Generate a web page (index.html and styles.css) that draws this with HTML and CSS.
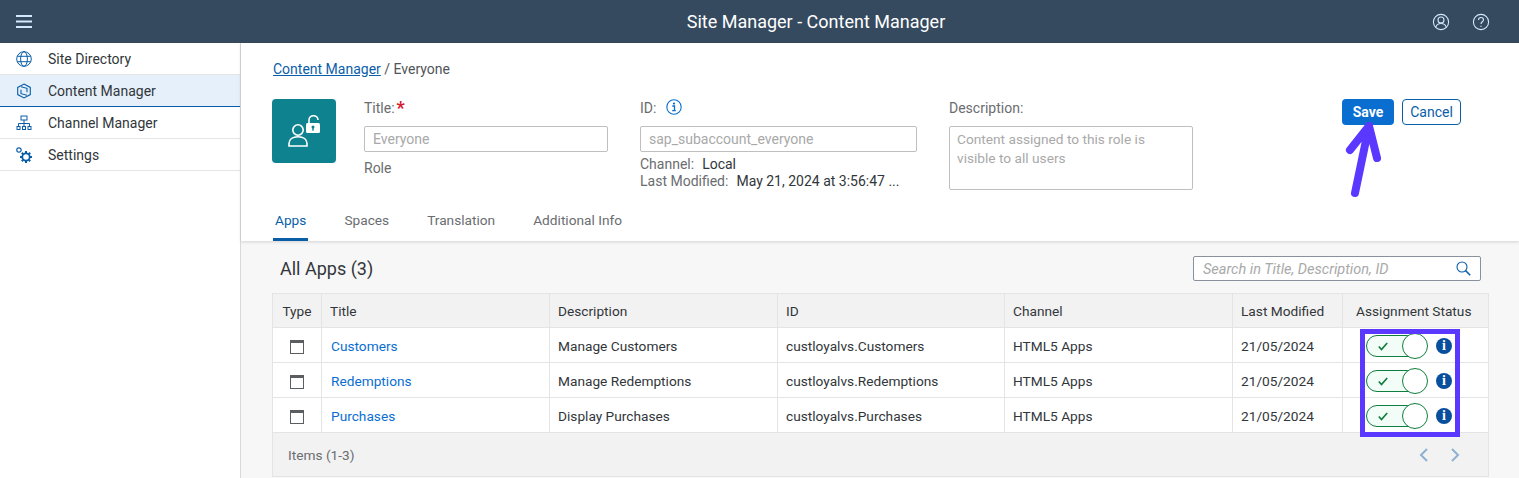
FILE: index.html
```html
<!DOCTYPE html>
<html lang="en">
<head>
    <meta charset="UTF-8">
    <title>Site Manager - Content Manager</title>
    <link rel="stylesheet" href="styles.css">
</head>
<body>
    <header class="shell">
        <svg class="shell-menu" width="16" height="13" viewBox="0 0 16 13"><path d="M0 1h16M0 6.500h16M0 12h16" stroke="#d1e8ff" stroke-width="1.800"/></svg>
        <div class="shell-title">Site Manager - Content Manager</div>
        <div class="shell-icons">
            <svg width="18" height="18" viewBox="0 0 18 18" fill="none" stroke="#d1e8ff" stroke-width="1.100"><circle cx="9" cy="9" r="7.600"/><circle cx="9" cy="7" r="3"/><path d="M3.800 14.200c.8-2.600 2.800-3.700 5.200-3.700s4.400 1.100 5.200 3.700"/></svg>
            <svg width="18" height="18" viewBox="0 0 18 18" fill="none" stroke="#d1e8ff" stroke-width="1.100"><circle cx="9" cy="9" r="7.600"/><path d="M6.500 7c0-1.500 1.100-2.500 2.500-2.500s2.500 1 2.500 2.300c0 2-2.500 2-2.500 4.200"/><path d="M9 12.700v1.200"/></svg>
        </div>
    </header>

    <div class="layout">
        <nav class="sidebar">
            <a class="nav-item">
                <svg width="16" height="16" viewBox="0 0 16 16" fill="none" stroke="#0a5ea8" stroke-width="1"><circle cx="8" cy="8" r="7.300"/><ellipse cx="8" cy="8" rx="3.400" ry="7.300"/><path d="M1.300 5.300h13.400M1.300 10.700h13.400"/></svg>
                Site Directory
            </a>
            <a class="nav-item active">
                <svg width="16" height="16" viewBox="0 0 16 16" fill="none" stroke="#0a5ea8" stroke-width="1.100"><path d="M8 1l6.300 3.400v7.200L8 15l-6.300-3.400V4.400z"/><path d="M5 3.700l6 1.600v4M11 12.300l-6-1.600v-4"/></svg>
                Content Manager
            </a>
            <a class="nav-item">
                <svg width="16" height="16" viewBox="0 0 16 16" fill="none" stroke="#0a5ea8" stroke-width="1"><rect x="5" y="1" width="6" height="4"/><path d="M8 5v3.500M2.500 11V8.500h11V11M8 8.500V11"/><rect x="1" y="11.500" width="3" height="3"/><rect x="6.500" y="11.500" width="3" height="3"/><rect x="12" y="11.500" width="3" height="3"/></svg>
                Channel Manager
            </a>
            <a class="nav-item">
                <svg width="16" height="16" viewBox="0 0 16 16" fill="none" stroke="#0a5ea8"><circle cx="3" cy="3" r="2.200" stroke-width="1.200"/><circle cx="10" cy="10" r="3.700" stroke-width="1.800"/><path d="M10 4v2M10 14v2M4 10h2M14 10h2M5.800 5.800l1.400 1.400M12.800 12.800l1.400 1.400M14.200 5.800l-1.400 1.400M7.200 12.800l-1.400 1.400" stroke-width="2"/></svg>
                Settings
            </a>
        </nav>

        <main class="content">
            <section class="details">
                <div class="breadcrumb"><a class="crumb-link">Content Manager</a> / Everyone</div>
                <div class="form-row">
                    <div class="role-tile">
                        <svg width="32" height="32" viewBox="0 0 32 32" fill="none" stroke="#fff" stroke-width="1.600"><circle cx="10" cy="15" r="5.200"/><path d="M1 31v-2.500c0-4 3.500-6.800 9-6.800s9 2.800 9 6.800V31z"/><path d="M21 9V5c0-2.500 2-4.300 4.500-4.300S30 2.500 30 5"/><rect x="18" y="8" width="14" height="10" rx="1.500" fill="#fff" stroke="none"/><circle cx="25" cy="12" r="1.500" fill="#0f828f" stroke="none"/><rect x="24.300" y="12.500" width="1.400" height="3.200" fill="#0f828f" stroke="none"/></svg>
                    </div>
                    <div class="field field-title">
                        <div class="field-label">Title:<span class="required">*</span></div>
                        <div class="input">Everyone</div>
                        <div class="role-text">Role</div>
                    </div>
                    <div class="field field-id">
                        <div class="field-label">ID:
                            <svg class="id-info" width="16" height="16" viewBox="0 0 16 16" fill="none"><circle cx="8" cy="8" r="7.200" stroke="#0a6ed1" stroke-width="1.100"/><circle cx="8" cy="4.600" r="1.100" fill="#0a6ed1"/><path d="M6.300 7h2.200v4.500M6.200 11.700h3.600" stroke="#0a6ed1" stroke-width="1.300"/></svg>
                        </div>
                        <div class="input">sap_subaccount_everyone</div>
                        <div class="meta meta-first"><span class="meta-key">Channel:</span>Local</div>
                        <div class="meta"><span class="meta-key">Last Modified:</span>May 21, 2024 at 3:56:47 ...</div>
                    </div>
                    <div class="field field-desc">
                        <div class="field-label">Description:</div>
                        <div class="input textarea">Content assigned to this role is visible to all users</div>
                    </div>
                    <div class="actions">
                        <button class="btn btn-save">Save</button>
                        <button class="btn btn-cancel">Cancel</button>
                    </div>
                </div>
                <div class="tabs">
                    <a class="tab active">Apps</a>
                    <a class="tab">Spaces</a>
                    <a class="tab">Translation</a>
                    <a class="tab">Additional Info</a>
                </div>
            </section>

            <section class="apps">
                <div class="apps-head">
                    <h2>All Apps (3)</h2>
                    <div class="search">
                        <span class="search-text">Search in Title, Description, ID</span>
                        <svg width="15" height="15" viewBox="0 0 15 15" fill="none" stroke="#0a5ea8"><circle cx="6" cy="6" r="5" stroke-width="1.100"/><path d="M9.600 9.600l4.600 4.600" stroke-width="1.500"/></svg>
                    </div>
                </div>
                <table class="apps-table">
                    <colgroup>
                        <col class="col-type"><col class="col-title"><col class="col-desc"><col class="col-id"><col class="col-channel"><col class="col-modified"><col>
                    </colgroup>
                    <thead>
                        <tr>
                            <th class="center">Type</th>
                            <th>Title</th>
                            <th>Description</th>
                            <th>ID</th>
                            <th>Channel</th>
                            <th>Last Modified</th>
                            <th class="th-status">Assignment Status</th>
                        </tr>
                    </thead>
                    <tbody>
                        <tr>
                            <td class="center"><span class="app-icon"></span></td>
                            <td><a class="app-link">Customers</a></td>
                            <td>Manage Customers</td>
                            <td>custloyalvs.Customers</td>
                            <td>HTML5 Apps</td>
                            <td>21/05/2024</td>
                            <td>
                                <div class="status">
                                    <div class="switch"><svg width="10" height="9" viewBox="0 0 10 9" fill="none"><path d="M.8 4.500l2.700 3L9.200 1" stroke="#107e3e" stroke-width="1.700"/></svg><span class="knob"></span></div>
                                    <span class="info-dot">i</span>
                                </div>
                            </td>
                        </tr>
                        <tr>
                            <td class="center"><span class="app-icon"></span></td>
                            <td><a class="app-link">Redemptions</a></td>
                            <td>Manage Redemptions</td>
                            <td>custloyalvs.Redemptions</td>
                            <td>HTML5 Apps</td>
                            <td>21/05/2024</td>
                            <td>
                                <div class="status">
                                    <div class="switch"><svg width="10" height="9" viewBox="0 0 10 9" fill="none"><path d="M.8 4.500l2.700 3L9.200 1" stroke="#107e3e" stroke-width="1.700"/></svg><span class="knob"></span></div>
                                    <span class="info-dot">i</span>
                                </div>
                            </td>
                        </tr>
                        <tr>
                            <td class="center"><span class="app-icon"></span></td>
                            <td><a class="app-link">Purchases</a></td>
                            <td>Display Purchases</td>
                            <td>custloyalvs.Purchases</td>
                            <td>HTML5 Apps</td>
                            <td>21/05/2024</td>
                            <td>
                                <div class="status">
                                    <div class="switch"><svg width="10" height="9" viewBox="0 0 10 9" fill="none"><path d="M.8 4.500l2.700 3L9.200 1" stroke="#107e3e" stroke-width="1.700"/></svg><span class="knob"></span></div>
                                    <span class="info-dot">i</span>
                                </div>
                            </td>
                        </tr>
                    </tbody>
                </table>
                <div class="table-foot">
                    <span>Items (1-3)</span>
                    <div class="pager">
                        <svg width="11" height="16" viewBox="0 0 11 16" fill="none" stroke="#8fb0d2" stroke-width="2"><path d="M9 2L3 8l6 6"/></svg>
                        <svg width="11" height="16" viewBox="0 0 11 16" fill="none" stroke="#8fb0d2" stroke-width="2"><path d="M2 2l6 6-6 6"/></svg>
                    </div>
                </div>
            </section>
        </main>
    </div>

    <!-- annotations drawn over the screenshot -->
    <div class="mark-box"></div>
    <svg class="mark-arrow" width="40" height="80" viewBox="0 0 40 80" fill="none" stroke="#5a38ff" stroke-width="8" stroke-linecap="round" stroke-linejoin="round"><path d="M11 71L25 4M6 28L25 4l8 32"/></svg>
</body>
</html>
```

FILE: styles.css
```css
* {
    margin: 0;
    padding: 0;
    box-sizing: border-box;
}

body {
    font-family: Roboto, sans-serif;
    font-size: 14px;
    color: #32363a;
    background-color: #fff;
    height: 478px;
    overflow: hidden;
}

.shell {
    height: 43px;
    background-color: #354a5f;
    display: flex;
    align-items: center;
    padding: 0 29px 0 16px;
}

.shell-title {
    flex: 1;
    text-align: center;
    color: #fff;
    font-size: 18px;
    padding-left: 168px;
}

.shell-icons {
    display: flex;
    gap: 22px;
}

.layout {
    display: flex;
    height: 435px;
}

.sidebar {
    width: 241px;
    border-right: 1px solid #d9d9d9;
    flex-shrink: 0;
}

.nav-item {
    display: flex;
    align-items: center;
    gap: 16px;
    height: 32px;
    padding-left: 16px;
    border-bottom: 1px solid #e5e5e5;
}

.nav-item.active {
    background-color: #e5f0fa;
    border-bottom-color: #0a5ea8;
}

.content {
    flex: 1;
    min-width: 0;
}

.details {
    height: 198px;
    padding: 17px 0 0 31px;
    box-shadow: 0 1px 3px rgba(0, 0, 0, 0.15);
    position: relative;
}

.breadcrumb {
    color: #515559;
    height: 18px;
    line-height: 18px;
    padding-left: 1px;
}

.crumb-link {
    color: #0a5ea8;
    text-decoration: underline;
}

.form-row {
    display: flex;
    margin-top: 21px;
    height: 106px;
}

.role-tile {
    width: 64px;
    height: 64px;
    background-color: #0f828f;
    border-radius: 4px;
    display: flex;
    align-items: center;
    justify-content: center;
    margin-right: 28px;
}

.field {
    margin-right: 32px;
}

.field-title {
    width: 244px;
}

.field-id {
    width: 277px;
}

.field-desc {
    width: 244px;
    margin-right: 149px;
}

.field-label {
    color: #6a6d70;
    height: 18px;
    line-height: 18px;
    display: flex;
    align-items: center;
    margin-bottom: 9px;
}

.required {
    color: #d32030;
    font-size: 18px;
    font-weight: bold;
    margin-left: 2px;
}

.id-info {
    margin-left: 10px;
    margin-top: -3px;
}

.input {
    height: 26px;
    line-height: 24px;
    border: 1px solid #bfbfbf;
    border-radius: 2px;
    padding: 0 8px;
    color: #a9a9a9;
    background-color: #fff;
}

.textarea {
    height: 64px;
    line-height: 19px;
    padding: 3px 7px;
    font-size: 13.7px;
}

.role-text {
    color: #6a6d70;
    margin-top: 8px;
}

.meta {
    line-height: 17px;
    color: #32363a;
    white-space: nowrap;
}

.meta-first {
    margin-top: 4px;
}

.meta-key {
    color: #6a6d70;
    margin-right: 8px;
}

.actions {
    display: flex;
    gap: 8px;
    align-items: flex-start;
}

.btn {
    height: 26px;
    border-radius: 4px;
    font-family: inherit;
    font-size: 14px;
}

.btn-save {
    width: 52px;
    background-color: #0a6ed1;
    color: #fff;
    font-weight: bold;
    border: none;
}

.btn-cancel {
    width: 59px;
    background-color: #fff;
    color: #0a5ea8;
    border: 1px solid #0a5ea8;
}

.tabs {
    display: flex;
    margin-left: 1px;
    gap: 34px;
    font-size: 13.7px;
}

.tab {
    color: #6a6d70;
    height: 36px;
    line-height: 31px;
    padding: 0 2px;
}

.tab.active {
    color: #0a5ea8;
    border-bottom: 3px solid #0a5ea8;
}

.apps {
    height: 237px;
    background-color: #f7f7f7;
    padding: 0 30px 0 31px;
}

.apps-head {
    display: flex;
    justify-content: space-between;
    align-items: center;
    height: 52px;
    padding: 3px 8px 0 8px;
}

.apps-head h2 {
    font-size: 18px;
    font-weight: normal;
}

.search {
    width: 288px;
    height: 25px;
    border: 1px solid #89919a;
    border-radius: 2px;
    background-color: #fff;
    display: flex;
    align-items: center;
    justify-content: space-between;
    padding: 0 9px;
    font-size: 14.5px;
    font-style: italic;
    color: #a9a9a9;
}

.search-text {
    padding-top: 1px;
}

.apps-table {
    width: 1217px;
    border-collapse: collapse;
    table-layout: fixed;
    background-color: #fff;
    font-size: 13.7px;
}

.col-type { width: 49px; }
.col-title { width: 228px; }
.col-desc { width: 228px; }
.col-id { width: 227px; }
.col-channel { width: 228px; }
.col-modified { width: 110px; }

.apps-table th,
.apps-table td {
    border: 1px solid #e4e4e4;
    padding: 0 8px;
    text-align: left;
    white-space: nowrap;
}

.apps-table th {
    height: 34px;
    background-color: #f2f2f2;
    font-weight: normal;
}

.apps-table th.th-status {
    padding-left: 13px;
}

.apps-table td {
    height: 35px;
    padding-top: 2px;
}

.apps-table th.center,
.apps-table td.center {
    text-align: center;
}

.app-icon {
    display: inline-block;
    width: 14px;
    height: 14px;
    border: 1px solid #5b5e61;
    border-top-width: 3px;
    vertical-align: middle;
}

.app-link {
    color: #0a6ed1;
    padding-left: 1px;
}

.status {
    display: flex;
    align-items: center;
    padding-left: 15px;
}

.switch {
    width: 60px;
    height: 22px;
    border: 1px solid #107e3e;
    border-radius: 11px;
    background-color: #f1fdf6;
    position: relative;
    padding: 6px 0 0 11px;
    line-height: 0;
}

.knob {
    position: absolute;
    right: -3px;
    top: -3px;
    width: 26px;
    height: 26px;
    border: 1px solid #107e3e;
    border-radius: 50%;
    background-color: #fff;
}

.info-dot {
    width: 16px;
    height: 16px;
    margin-left: 10px;
    border-radius: 50%;
    background-color: #0a4f9e;
    color: #fff;
    font: bold 14px/16px "Liberation Serif", serif;
    text-align: center;
}

.table-foot {
    width: 1217px;
    height: 44px;
    background-color: #f2f2f2;
    border: 1px solid #e4e4e4;
    border-top: none;
    display: flex;
    align-items: center;
    justify-content: space-between;
    padding: 0 27px 0 15px;
    color: #6a6d70;
    font-size: 13.7px;
}

.pager {
    display: flex;
    gap: 21px;
}

.mark-box {
    position: absolute;
    left: 1360px;
    top: 329px;
    width: 100px;
    height: 108px;
    border: 5px solid #5a38ff;
}

.mark-arrow {
    position: absolute;
    left: 1344px;
    top: 122px;
}
```
